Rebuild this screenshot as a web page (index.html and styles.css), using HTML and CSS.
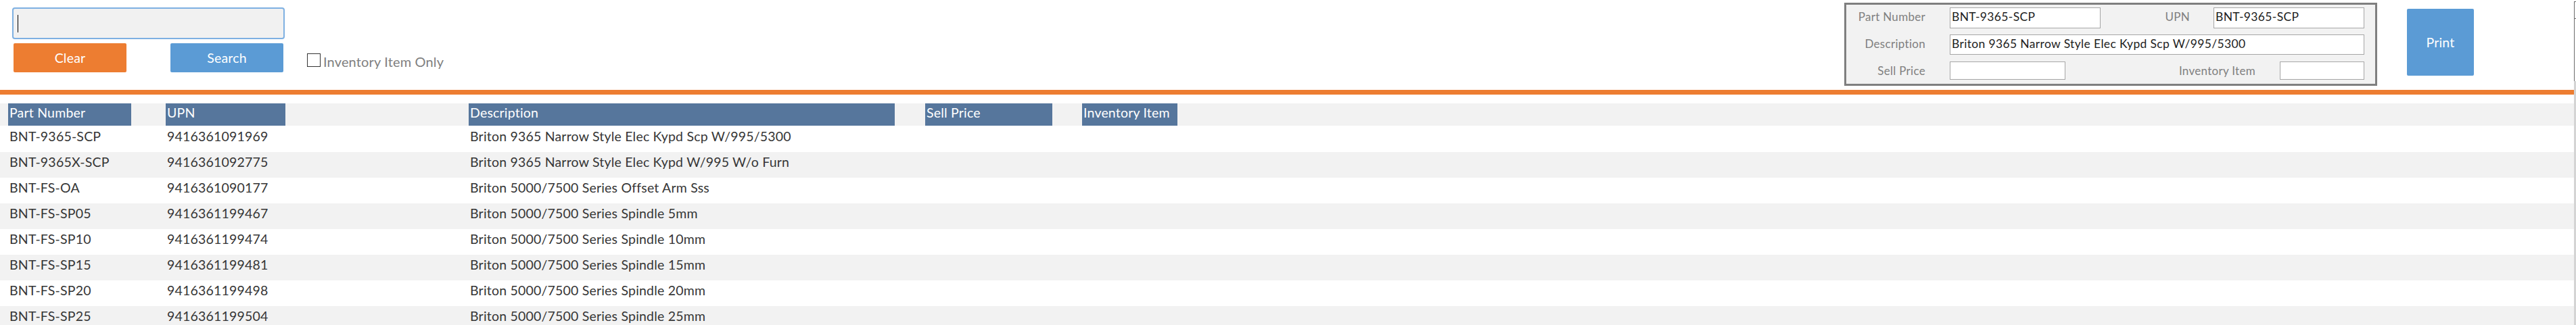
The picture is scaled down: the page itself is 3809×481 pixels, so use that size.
FILE: index.html
```html
<!DOCTYPE html>
<html lang="en">
<head>
<meta charset="utf-8">
<title>Part Lookup</title>
<link rel="stylesheet" href="styles.css">
</head>
<body>
<div class="app">
  <div class="main">
    <header class="toolbar">
      <div class="search">
        <label class="search-box"><span class="caret"></span><input class="search-input" type="text" aria-label="Search"></label>
        <div class="actions">
          <button class="btn btn-clear">Clear</button>
          <button class="btn btn-search">Search</button>
          <label class="option"><span class="checkbox"></span><span class="option-text">Inventory Item Only</span></label>
        </div>
      </div>
      <div class="panel">
        <div class="prow prow-tall prow-1">
          <span class="plabel">Part Number</span>
          <input class="pinput w-pn" type="text" value="BNT-9365-SCP" readonly>
          <span class="plabel plabel-upn">UPN</span>
          <input class="pinput w-upn" type="text" value="BNT-9365-SCP" readonly>
        </div>
        <div class="prow prow-tall prow-2">
          <span class="plabel">Description</span>
          <input class="pinput w-desc" type="text" value="Briton 9365 Narrow Style Elec Kypd Scp W/995/5300" readonly>
        </div>
        <div class="prow prow-3">
          <span class="plabel">Sell Price</span>
          <input class="pinput w-sell" type="text" value="" readonly>
          <span class="plabel plabel-inv">Inventory Item</span>
          <input class="pinput w-inv" type="text" value="" readonly>
        </div>
      </div>
      <button class="btn btn-print">Print</button>
    </header>
    <div class="rule"></div>
    <div class="list">
      <div class="row row-head">
        <div class="cell c-pn">Part Number</div>
        <div class="cell c-upn">UPN</div>
        <div class="cell c-desc">Description</div>
        <div class="cell c-sell">Sell Price</div>
        <div class="cell c-inv">Inventory Item</div>
      </div>
      <div class="row">
        <div class="cell c-pn">BNT-9365-SCP</div>
        <div class="cell c-upn">9416361091969</div>
        <div class="cell c-desc">Briton 9365 Narrow Style Elec Kypd Scp W/995/5300</div>
      </div>
      <div class="row">
        <div class="cell c-pn">BNT-9365X-SCP</div>
        <div class="cell c-upn">9416361092775</div>
        <div class="cell c-desc">Briton 9365 Narrow Style Elec Kypd W/995 W/o Furn</div>
      </div>
      <div class="row">
        <div class="cell c-pn">BNT-FS-OA</div>
        <div class="cell c-upn">9416361090177</div>
        <div class="cell c-desc">Briton 5000/7500 Series Offset Arm Sss</div>
      </div>
      <div class="row">
        <div class="cell c-pn">BNT-FS-SP05</div>
        <div class="cell c-upn">9416361199467</div>
        <div class="cell c-desc">Briton 5000/7500 Series Spindle 5mm</div>
      </div>
      <div class="row">
        <div class="cell c-pn">BNT-FS-SP10</div>
        <div class="cell c-upn">9416361199474</div>
        <div class="cell c-desc">Briton 5000/7500 Series Spindle 10mm</div>
      </div>
      <div class="row">
        <div class="cell c-pn">BNT-FS-SP15</div>
        <div class="cell c-upn">9416361199481</div>
        <div class="cell c-desc">Briton 5000/7500 Series Spindle 15mm</div>
      </div>
      <div class="row">
        <div class="cell c-pn">BNT-FS-SP20</div>
        <div class="cell c-upn">9416361199498</div>
        <div class="cell c-desc">Briton 5000/7500 Series Spindle 20mm</div>
      </div>
      <div class="row">
        <div class="cell c-pn">BNT-FS-SP25</div>
        <div class="cell c-upn">9416361199504</div>
        <div class="cell c-desc">Briton 5000/7500 Series Spindle 25mm</div>
      </div>
    </div>
  </div>
  <div class="scrollbar">
    <div class="scroll-top"><div class="scroll-notch"></div></div>
    <div class="scroll-track"></div>
  </div>
</div>
</body>
</html>
```

FILE: styles.css
```css
* { box-sizing: border-box; }

html, body {
  margin: 0;
  padding: 0;
  background: #ffffff;
}

body {
  font-family: Lato, "Open Sans", "Noto Sans", sans-serif;
  color: #363636;
  overflow: hidden;
}

.app {
  display: flex;
  width: 3809px;
  height: 481px;
  overflow: hidden;
}

.main {
  flex: none;
  width: 3806px;
  display: flex;
  flex-direction: column;
}

.main > * { flex: none; }

/* ---------- toolbar ---------- */
.toolbar {
  height: 133px;
  display: flex;
  align-items: flex-start;
}

.search {
  padding: 11px 0 0 18px;
  display: flex;
  flex-direction: column;
}

.search-box {
  width: 403px;
  height: 47px;
  border: 2px solid #7eb0e2;
  border-radius: 4px;
  background: #f1f1f1;
  display: flex;
  align-items: center;
  padding-left: 6px;
}

.caret {
  flex: none;
  width: 1px;
  height: 26px;
  background: #000;
}

.search-input {
  flex: 1;
  min-width: 0;
  height: 100%;
  border: none;
  outline: none;
  background: transparent;
  font: inherit;
}

.actions {
  display: flex;
  align-items: flex-start;
  margin: 6px 0 0 2px;
}

.btn {
  border: none;
  border-radius: 2px;
  color: #ffffff;
  font-family: Lato, "Open Sans", sans-serif;
  font-size: 19.5px;
  letter-spacing: 0.2px;
  padding: 0;
  cursor: pointer;
}

.btn-clear {
  width: 167px;
  height: 43px;
  background: #ed7d31;
}

.btn-search {
  width: 167px;
  height: 43px;
  margin-left: 65px;
  background: #5b9bd5;
}

.option {
  display: flex;
  align-items: flex-start;
  margin: 15px 0 0 35px;
}

.checkbox {
  flex: none;
  width: 20px;
  height: 20px;
  border: 1px solid #333333;
  background: #ffffff;
}

.option-text {
  margin-left: 4px;
  padding-top: 2px;
  font-size: 20px;
  line-height: 20px;
  letter-spacing: 0.15px;
  color: #808080;
}

/* ---------- detail panel ---------- */
.panel {
  margin: 4px 0 0 auto;
  width: 788px;
  height: 123px;
  border: 3px solid #7f7f7f;
  background: #f2f2f2;
  padding: 4px 16px 6px 0;
  display: flex;
  flex-direction: column;
}

.prow {
  flex: none;
  display: flex;
  align-items: center;
}

.prow-1 { height: 31px; }
.prow-2 { height: 30px; margin-top: 9px; }
.prow-3 { height: 27px; margin-top: 10px; }

.plabel {
  flex: none;
  width: 117px;
  text-align: right;
  font-size: 17px;
  letter-spacing: 0.3px;
  color: #808080;
  white-space: nowrap;
}

.prow-tall .plabel { padding-bottom: 4px; }

.plabel-upn { width: 132px; }
.plabel-inv { width: 281px; }

.pinput {
  flex: none;
  height: 100%;
  margin-left: 36px;
  border: 1px solid #a6a6a6;
  background: #ffffff;
  font-family: Lato, "Open Sans", sans-serif;
  font-size: 17.5px;
  letter-spacing: 0.35px;
  color: #1e1e1e;
  padding: 0 2px;
  outline: none;
}

.prow-tall .pinput { padding-bottom: 4px; }
.prow-2 .pinput { padding-bottom: 3px; }

.w-pn { width: 223px; }
.w-upn { width: 223px; margin-left: 35px; }
.w-desc { width: 613px; }
.w-sell { width: 171px; }
.w-inv { width: 125px; }

.btn-print {
  flex: none;
  width: 99px;
  height: 99px;
  margin: 13px 148px 0 44px;
  background: #5b9bd5;
}

/* ---------- rule ---------- */
.rule {
  height: 7px;
  background: #ed7d31;
}

/* ---------- list ---------- */
.list {
  margin-top: 13px;
  display: flex;
  flex-direction: column;
}

.row {
  flex: none;
  display: grid;
  grid-template-columns: 12px 182px 51px 177px 271px 630px 45px 188px 44px 141px 1fr;
  height: 38px;
  line-height: 30px;
  font-size: 19.5px;
  letter-spacing: 0.2px;
}

.row:nth-child(odd) { background: #f2f2f2; }

.row-head {
  height: 33px;
  line-height: 28px;
  margin-bottom: 1px;
  background: #ffffff;
}

.row-head .cell {
  background: #56769c;
  color: #ffffff;
}

.cell {
  padding-left: 2px;
  white-space: nowrap;
}

.c-pn { grid-column: 2; }
.c-upn { grid-column: 4; }
.c-desc { grid-column: 6; }
.c-sell { grid-column: 8; }
.c-inv { grid-column: 10; }

/* ---------- scrollbar sliver ---------- */
.scrollbar {
  flex: none;
  width: 3px;
  display: flex;
  flex-direction: column;
}

.scroll-top {
  flex: none;
  height: 118px;
  margin-top: 2px;
  border-left: 1px solid #6a6a6a;
  border-top: 1px solid #6a6a6a;
  padding-top: 24px;
}

.scroll-notch {
  height: 1px;
  background: #6a6a6a;
}

.scroll-track {
  flex: 1;
  background: #d4d4d4;
}
```
